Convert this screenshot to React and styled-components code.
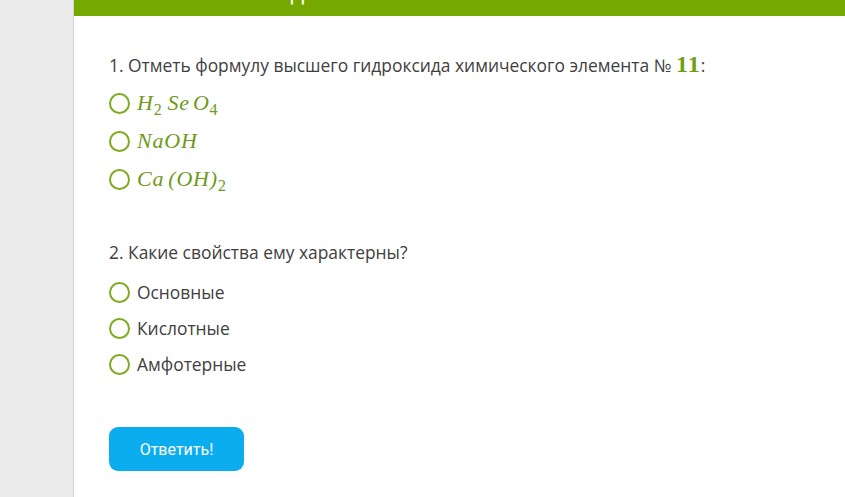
import styled, { createGlobalStyle } from "styled-components";

const GlobalStyle = createGlobalStyle`
  body {
    margin: 0;
    background: #fff;
    font-family: "Open Sans", "Liberation Sans", sans-serif;
  }
`;

const Page = styled.div`
  display: flex;
  min-height: 497px;
`;

const Sidebar = styled.div`
  width: 73px;
  flex-shrink: 0;
  background: #ebebeb;
  border-right: 1px solid #d2d2d2;
`;

const Main = styled.div`
  flex: 1;
  background: #fff;
`;

const Header = styled.div`
  height: 16px;
  background: #76a900;
  overflow: hidden;
  display: flex;
  align-items: flex-end;
  padding-left: 75px;
`;

const HeaderTitle = styled.div`
  color: #fff;
  font-size: 24px;
  line-height: 24px;
  margin-bottom: 13px;
  white-space: nowrap;
`;

const Content = styled.div`
  padding: 37px 0 0 35px;
`;

const Question = styled.div`
  margin-bottom: ${(p) => p.$gap || 0}px;
`;

const Title = styled.div`
  font-size: 17.4px;
  line-height: 22px;
  color: #404040;
  margin-bottom: ${(p) => p.$mb || 8}px;
`;

const Num = styled.span`
  font-family: "Liberation Serif", "DejaVu Serif", serif;
  font-weight: bold;
  font-size: 24px;
  letter-spacing: 1px;
  color: #6f9f12;
`;

const Options = styled.div`
  display: flex;
  flex-direction: column;
`;

const Option = styled.label`
  display: flex;
  align-items: center;
  gap: 7px;
  height: ${(p) => p.$h}px;
  cursor: pointer;
`;

const Radio = styled.span`
  width: 17px;
  height: 17px;
  border: 2px solid #7cab1f;
  border-radius: 50%;
  flex-shrink: 0;
`;

const Formula = styled.span`
  font-family: "Liberation Serif", "DejaVu Serif", serif;
  font-style: italic;
  font-size: 22px;
  letter-spacing: 0.8px;
  color: #6f9a18;
  white-space: nowrap;

  sub {
    font-style: normal;
    font-size: 16px;
    vertical-align: -5px;
    line-height: 0;
  }
`;

const Gap = styled.span`
  display: inline-block;
  width: ${(p) => p.$w}px;
`;

const Text = styled.span`
  font-size: 17.4px;
  color: #404040;
`;

const Button = styled.button`
  margin-top: 45px;
  width: 135px;
  height: 44px;
  border: none;
  border-radius: 9px;
  background: #0badef;
  color: #fff;
  font-family: "Roboto", "Liberation Sans", sans-serif;
  font-size: 16px;
  cursor: pointer;
`;

const q2 = ["Основные", "Кислотные", "Амфотерные"];

export default function App() {
  return (
    <Page>
      <GlobalStyle />
      <Sidebar />
      <Main>
        <Header>
          <HeaderTitle>Итоговое задание</HeaderTitle>
        </Header>
        <Content>
          <Question $gap={43}>
            <Title>
              1. Отметь формулу высшего гидроксида химического элемента № <Num>11</Num>:
            </Title>
            <Options>
              <Option $h={38}>
                <Radio />
                <Formula>
                  H<sub>2</sub>
                  <Gap $w={5} />
                  Se
                  <Gap $w={3} />
                  O<sub>4</sub>
                </Formula>
              </Option>
              <Option $h={38}>
                <Radio />
                <Formula>NaOH</Formula>
              </Option>
              <Option $h={38}>
                <Radio />
                <Formula>
                  Ca<Gap $w={4} />(OH)<sub>2</sub>
                </Formula>
              </Option>
            </Options>
          </Question>
          <Question>
            <Title $mb={11}>2. Какие свойства ему характерны?</Title>
            <Options>
              {q2.map((t) => (
                <Option key={t} $h={36}>
                  <Radio />
                  <Text>{t}</Text>
                </Option>
              ))}
            </Options>
          </Question>
          <Button>Ответить!</Button>
        </Content>
      </Main>
    </Page>
  );
}
